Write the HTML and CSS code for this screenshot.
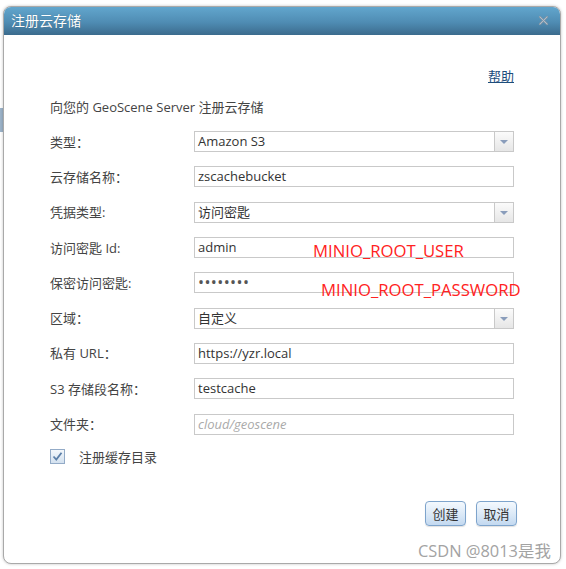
FILE: index.html
```html
<!DOCTYPE html>
<html lang="zh-CN">
<head>
  <meta charset="UTF-8">
  <meta name="viewport" content="width=device-width, initial-scale=1.0">
  <link rel="stylesheet" href="styles.css">
  <title>注册云存储</title>
</head>
<body>
  <div class="page-edge"></div>
  <div class="dialog">
    <div class="titlebar">
      <span class="title">注册云存储</span>
      <svg class="close" width="11" height="11" viewBox="0 0 11 11">
        <path d="M2 2 L9 9 M9 2 L2 9" stroke="#8297a8" stroke-width="2.4" stroke-linecap="round"/>
        <path d="M2 2 L9 9 M9 2 L2 9" stroke="#b4c3cf" stroke-width="0.9" stroke-linecap="round"/>
      </svg>
    </div>

    <div class="body">
      <div class="help"><a href="#help">帮助</a></div>
      <p class="intro">向您的 GeoScene Server 注册云存储</p>

      <div class="form">
        <div class="row">
          <label>类型：</label>
          <div class="field select"><span class="value">Amazon S3</span><span class="arrow"></span></div>
        </div>
        <div class="row">
          <label>云存储名称：</label>
          <div class="field"><span class="value">zscachebucket</span></div>
        </div>
        <div class="row">
          <label>凭据类型:</label>
          <div class="field select"><span class="value">访问密匙</span><span class="arrow"></span></div>
        </div>
        <div class="row">
          <label>访问密匙 Id:</label>
          <div class="field"><span class="value">admin</span></div>
        </div>
        <div class="row">
          <label>保密访问密匙:</label>
          <div class="field"><span class="value dots">••••••••</span></div>
        </div>
        <div class="row">
          <label>区域：</label>
          <div class="field select"><span class="value">自定义</span><span class="arrow"></span></div>
        </div>
        <div class="row">
          <label>私有 URL：</label>
          <div class="field"><span class="value">https://yzr.local</span></div>
        </div>
        <div class="row">
          <label>S3 存储段名称：</label>
          <div class="field"><span class="value">testcache</span></div>
        </div>
        <div class="row">
          <label>文件夹：</label>
          <div class="field"><span class="value placeholder">cloud/geoscene</span></div>
        </div>
        <div class="check-row">
          <span class="checkbox">
            <svg width="11" height="11" viewBox="0 0 11 11"><path d="M1.5 5.5 L4.3 8.5 L9.5 1.8" fill="none" stroke="#5b7fa8" stroke-width="1.8"/></svg>
          </span>
          <span>注册缓存目录</span>
        </div>
      </div>

      <div class="actions">
        <button class="btn">创建</button>
        <button class="btn">取消</button>
      </div>
    </div>

    <div class="note note-user">MINIO_ROOT_USER</div>
    <div class="note note-pass">MINIO_ROOT_PASSWORD</div>
  </div>
  <div class="watermark">CSDN @8013是我</div>
</body>
</html>
```

FILE: styles.css
```css
* {
  margin: 0;
  padding: 0;
  box-sizing: border-box;
}

body {
  background-color: #fff;
  font-family: "Open Sans", "Noto Sans CJK SC", sans-serif;
  font-size: 13px;
  color: #444;
  width: 566px;
  height: 569px;
  overflow: hidden;
  position: relative;
}

.page-edge {
  position: absolute;
  left: 0;
  top: 108px;
  width: 4px;
  height: 24px;
  background-color: #9cb3c9;
}

.dialog {
  position: relative;
  margin: 6px 0 0 3px;
  width: 558px;
  height: 558px;
  border: 1px solid #a9a9a9;
  border-radius: 8px;
  overflow: hidden;
  background-color: #fff;
  box-shadow: 0 0 3px rgba(0, 0, 0, 0.25);
}

.titlebar {
  height: 28px;
  display: flex;
  align-items: center;
  justify-content: space-between;
  padding: 0 11px 0 7px;
  background: linear-gradient(#62a6cd, #4f8cb3 55%, #3b6b8d);
}

.title {
  color: #fff;
  font-size: 14px;
  line-height: 20px;
  text-shadow: 0 0 1px rgba(0, 0, 0, 0.3);
}

.close {
  display: block;
  margin-bottom: 2px;
}

.body {
  padding: 31px 46px 0 46px;
}

.help {
  text-align: right;
  line-height: 20px;
}

.help a {
  color: #1d4d7c;
  text-decoration: underline;
}

.intro {
  margin-top: 11px;
  line-height: 20px;
  color: #444;
}

.form {
  margin-top: 7px;
}

.row {
  display: flex;
  align-items: center;
  height: 35.3px;
}

.row label {
  width: 144px;
  flex: none;
  line-height: 20px;
}

.field {
  width: 323px;
  height: 21px;
  border: 1px solid #c9c9c9;
  display: flex;
  align-items: center;
  background-color: #fff;
}

.value {
  flex: 1;
  padding-left: 3px;
  line-height: 19px;
  color: #333;
  white-space: nowrap;
}

.dots {
  font-size: 16px;
  letter-spacing: 0.4px;
  color: #555;
}

.placeholder {
  color: #aaa;
  font-style: italic;
}

.select .arrow {
  width: 19px;
  height: 19px;
  border-left: 1px solid #c9c9c9;
  background: linear-gradient(#fbfbfb, #e6e6e6);
  position: relative;
}

.select .arrow::after {
  content: "";
  position: absolute;
  left: 5px;
  top: 8px;
  border-left: 4px solid transparent;
  border-right: 4px solid transparent;
  border-top: 4px solid #8a9dbb;
}

.check-row {
  display: flex;
  align-items: center;
  height: 30px;
  gap: 14px;
}

.checkbox {
  width: 15px;
  height: 15px;
  border: 1px solid #93abc7;
  background: linear-gradient(#f3f7fb, #d3e1ef);
  display: flex;
  align-items: center;
  justify-content: center;
}

.checkbox svg {
  display: block;
}

.actions {
  margin-top: 29px;
  margin-right: -3px;
  display: flex;
  justify-content: flex-end;
  gap: 10px;
}

.btn {
  width: 41px;
  height: 25px;
  font-family: "Open Sans", "Noto Sans CJK SC", sans-serif;
  font-size: 13px;
  color: #333;
  border: 1px solid #7ea4cc;
  border-radius: 4px;
  background: linear-gradient(#f4f9fe, #d8e7f6 60%, #c3d9f0);
  box-shadow: 0 1px 1px rgba(0, 0, 0, 0.12);
}

.note {
  position: absolute;
  color: #ff2222;
  font-size: 16.7px;
  line-height: 20px;
  white-space: nowrap;
}

.note-user {
  left: 309px;
  top: 234px;
}

.note-pass {
  left: 317px;
  top: 273px;
}

.watermark {
  position: absolute;
  left: 418px;
  top: 541px;
  font-size: 16.4px;
  line-height: 20px;
  color: #a3a3a3;
}
```
